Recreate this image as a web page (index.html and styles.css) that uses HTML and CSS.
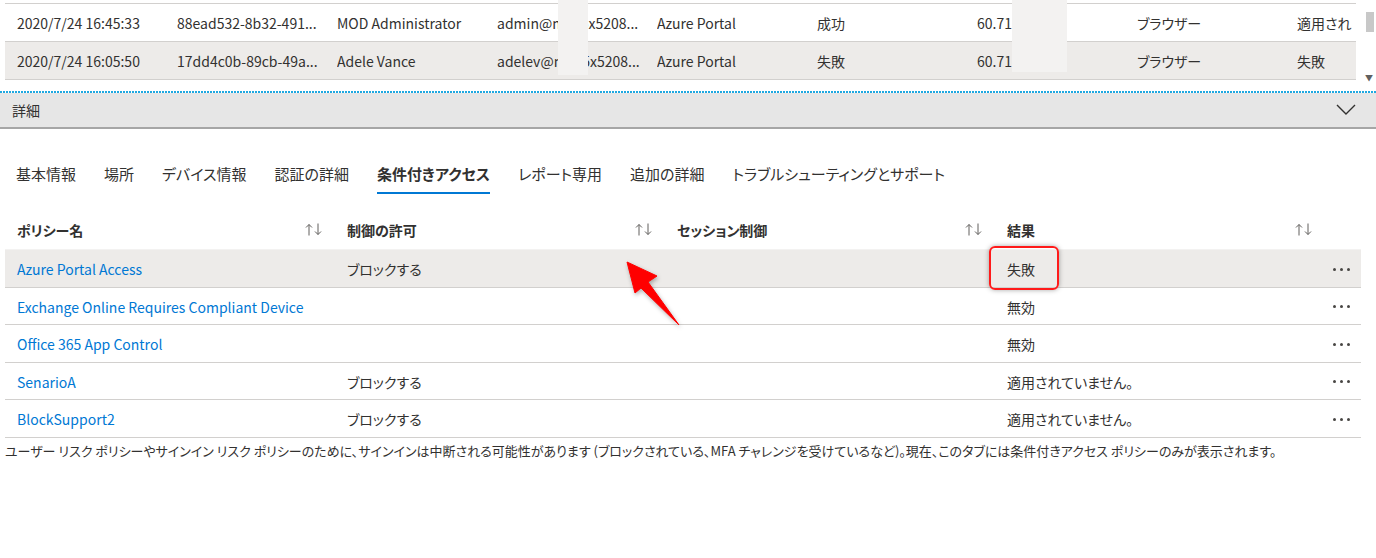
FILE: index.html
```html
<!DOCTYPE html>
<html lang="ja">
<head>
<meta charset="utf-8">
<link rel="stylesheet" href="styles.css">
</head>
<body>
<div class="top">
  <div class="top-table">
    <div class="trow">
      <span>2020/7/24 16:45:33</span><span>88ead532-8b32-491...</span><span>MOD Administrator</span><span>admin@m365x5208...</span><span>Azure Portal</span><span>成功</span><span>60.71</span><span>ブラウザー</span><span>適用され</span>
    </div>
    <div class="trow sel">
      <span>2020/7/24 16:05:50</span><span>17dd4c0b-89cb-49a...</span><span>Adele Vance</span><span>adelev@m365x5208...</span><span>Azure Portal</span><span>失敗</span><span>60.71</span><span>ブラウザー</span><span>失敗</span>
    </div>
  </div>
  <div class="mask mask1"></div>
  <div class="mask mask2"></div>
  <div class="scrollbar"><div class="thumb"></div><div class="sarrow">▼</div></div>
</div>
<div class="dotline"></div>
<div class="details-bar">
  <span>詳細</span>
  <svg class="chev" width="20" height="12" viewBox="0 0 20 12"><path d="M1 1 L10 10 L19 1" fill="none" stroke="#323130" stroke-width="1.4"/></svg>
</div>
<div class="tabs">
  <span class="tab">基本情報</span>
  <span class="tab">場所</span>
  <span class="tab">デバイス情報</span>
  <span class="tab">認証の詳細</span>
  <span class="tab active">条件付きアクセス</span>
  <span class="tab">レポート専用</span>
  <span class="tab">追加の詳細</span>
  <span class="tab">トラブルシューティングとサポート</span>
</div>
<div class="grid">
  <div class="ghead">
    <div class="hc"><span>ポリシー名</span><svg class="sort" width="18" height="13" viewBox="0 0 18 13"><path d="M4 12.5V1.5M1 4.5L4 1.5L7 4.5M13 0.5V11.5M10 8.5L13 11.5L16 8.5" fill="none" stroke="#605e5c" stroke-width="1"/></svg></div>
    <div class="hc"><span>制御の許可</span><svg class="sort" width="18" height="13" viewBox="0 0 18 13"><path d="M4 12.5V1.5M1 4.5L4 1.5L7 4.5M13 0.5V11.5M10 8.5L13 11.5L16 8.5" fill="none" stroke="#605e5c" stroke-width="1"/></svg></div>
    <div class="hc"><span>セッション制御</span><svg class="sort" width="18" height="13" viewBox="0 0 18 13"><path d="M4 12.5V1.5M1 4.5L4 1.5L7 4.5M13 0.5V11.5M10 8.5L13 11.5L16 8.5" fill="none" stroke="#605e5c" stroke-width="1"/></svg></div>
    <div class="hc"><span>結果</span><svg class="sort" width="18" height="13" viewBox="0 0 18 13"><path d="M4 12.5V1.5M1 4.5L4 1.5L7 4.5M13 0.5V11.5M10 8.5L13 11.5L16 8.5" fill="none" stroke="#605e5c" stroke-width="1"/></svg></div>
  </div>
  <div class="grow hover">
    <div class="c link">Azure Portal Access</div><div class="c">ブロックする</div><div class="c"></div><div class="c res"><span class="hl"></span>失敗</div><div class="more"><i></i><i></i><i></i></div>
  </div>
  <div class="grow">
    <div class="c link">Exchange Online Requires Compliant Device</div><div class="c"></div><div class="c"></div><div class="c res">無効</div><div class="more"><i></i><i></i><i></i></div>
  </div>
  <div class="grow">
    <div class="c link">Office 365 App Control</div><div class="c"></div><div class="c"></div><div class="c res">無効</div><div class="more"><i></i><i></i><i></i></div>
  </div>
  <div class="grow">
    <div class="c link">SenarioA</div><div class="c">ブロックする</div><div class="c"></div><div class="c res">適用されていません。</div><div class="more"><i></i><i></i><i></i></div>
  </div>
  <div class="grow">
    <div class="c link">BlockSupport2</div><div class="c">ブロックする</div><div class="c"></div><div class="c res">適用されていません。</div><div class="more"><i></i><i></i><i></i></div>
  </div>
  <svg class="arrow" width="70" height="80" viewBox="0 0 70 80"><polygon points="7,7 37,21 28,27 59,70 21,33 15,38" fill="#ff0000" stroke="#ff0000" stroke-width="1" stroke-linejoin="round"/></svg>
</div>
<p class="note">ユーザー リスク ポリシーやサインイン リスク ポリシーのために、サインインは中断される可能性があります (ブロックされている、MFA チャレンジを受けているなど)。現在、このタブには条件付きアクセス ポリシーのみが表示されます。</p>
</body>
</html>
```
FILE: styles.css
```css
* { box-sizing: border-box; }
body {
  margin: 0;
  background: #fff;
  color: #323130;
  font-family: "Segoe UI", "Noto Sans CJK JP", sans-serif;
  font-size: 14px;
  font-feature-settings: "palt";
}
.top {
  position: relative;
  height: 91px;
  overflow: hidden;
}
.top-table {
  margin-left: 5px;
  width: 1351px;
  padding-top: 3px;
}
.trow {
  display: grid;
  grid-template-columns: repeat(8, 160px) 71px;
  height: 39px;
  align-items: center;
  border-top: 1px solid #d2d0ce;
  border-bottom: 1px solid #d2d0ce;
  margin-bottom: -1px;
  padding-left: 12px;
  white-space: nowrap;
}
.trow span { overflow: hidden; }
.trow.sel { background: #edebe9; }
.mask {
  position: absolute;
  top: 0;
  background: #f3f2f1;
}
.mask1 { left: 558px; width: 30px; height: 75px; }
.mask2 { left: 1012px; width: 55px; height: 72px; }
.scrollbar {
  position: absolute;
  right: 0;
  top: 0;
  width: 12px;
  height: 91px;
  background: #fff;
}
.thumb {
  position: absolute;
  left: 2px;
  top: 12px;
  width: 8px;
  height: 20px;
  background: #c8c8c8;
}
.sarrow {
  position: absolute;
  left: 1px;
  top: 72px;
  font-size: 8px;
  color: #606060;
}
.dotline {
  height: 2px;
  background: repeating-linear-gradient(90deg, #1fa8e0 0 2px, transparent 2px 3px);
}
.details-bar {
  height: 36px;
  background: #e6e6e6;
  border-bottom: 2px solid #a6a6a6;
  display: flex;
  align-items: center;
  justify-content: space-between;
  padding: 0 20px 0 12px;
  font-size: 14px;
}
.tabs {
  display: flex;
  align-items: flex-start;
  padding: 31px 0 0 16px;
  height: 81px;
}
.tab {
  font-size: 15px;
  margin-right: 28px;
  height: 34px;
  line-height: 28px;
  white-space: nowrap;
}
.tab.active {
  font-weight: 600;
  border-bottom: 2px solid #0078d4;
}
.grid {
  position: relative;
  margin: 0 15px 0 5px;
}
.ghead {
  display: grid;
  grid-template-columns: repeat(4, 330px);
  height: 40px;
  border-bottom: 1px solid #f3f2f1;
}
.hc {
  display: flex;
  align-items: center;
  justify-content: space-between;
  padding: 0 12px 0 12px;
  font-weight: 600;
}
.sort { display: block; }
.grow {
  display: grid;
  grid-template-columns: repeat(4, 330px) 1fr;
  height: 37.5px;
  padding-top: 2px;
  align-items: center;
  border-bottom: 1px solid #d2d0ce;
}
.grow.hover { background: #edebe9; }
.c { padding-left: 12px; white-space: nowrap; }
.link { color: #0078d4; }
.res { position: relative; }
.hl {
  position: absolute;
  left: -6px;
  top: -13px;
  width: 70px;
  height: 44px;
  border: 2px solid #ff1a1a;
  border-radius: 6px;
  box-shadow: 0 0 5px rgba(0,0,0,0.35);
}
.more {
  display: flex;
  justify-content: flex-end;
  gap: 4px;
  padding-right: 11px;
}
.more i {
  width: 3px;
  height: 3px;
  border-radius: 50%;
  background: #484644;
}
.arrow {
  position: absolute;
  left: 615px;
  top: 45px;
  filter: drop-shadow(1px 2px 2px rgba(0,0,0,0.3));
}
.note {
  margin: 0;
  padding: 4px 0 0 5px;
  font-size: 13px;
  line-height: 18px;
  white-space: nowrap;
}
```
